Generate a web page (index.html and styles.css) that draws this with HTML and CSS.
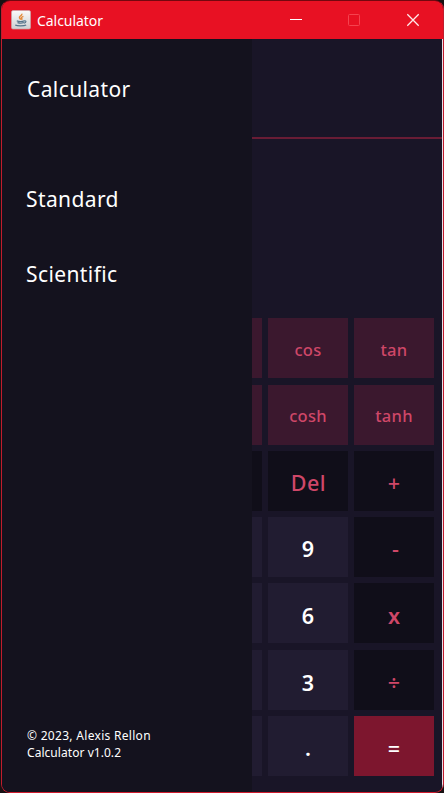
FILE: index.html
```html
<!DOCTYPE html>
<html lang="en">
<head>
<meta charset="utf-8">
<title>Calculator</title>
<link rel="stylesheet" href="styles.css">
</head>
<body>
<div class="window">
  <header class="titlebar">
    <svg class="app-icon" width="20" height="20" viewBox="0 0 20 20">
      <defs><linearGradient id="tile" x2="0" y2="1"><stop stop-color="#fafafa"/><stop offset="1" stop-color="#cdd0d3"/></linearGradient></defs>
      <rect x=".5" y=".5" width="19" height="18.5" rx="1.5" fill="url(#tile)" stroke="#c9a6a8" stroke-width=".7"/>
      <path d="M10.600 3.800c1.200 1.500-2.600 2.300-2.200 3.900.2.900 1.200 1.300 1.400 1.900M12.400 6.300c-2 .7-2.600 1.400-1.600 2.200.5.500.2.800-.2 1.200" fill="none" stroke="#e38a3c" stroke-width="1.400"/>
      <path d="M5.800 10.900c2 .6 5.500.6 7.500 0M6.500 12.600c2 .6 4.500.6 6.300 0M4.200 15c1.800 1.200 9 1.200 11 0M13.300 10.900c2.300-.3 2.200 1.800-.4 2.200" fill="none" stroke="#56758c" stroke-width="1.100"/>
    </svg>
    <span class="title">Calculator</span>
    <svg class="controls" width="130" height="14" viewBox="0 0 130 14" fill="none">
      <path d="M0 6.500h12" stroke="#fff"/>
      <rect x="58.500" y="1.500" width="11" height="11" rx="1" stroke="#f5434f"/>
      <path d="M117.300 1.300l11.400 11.400m0-11.400l-11.400 11.400" stroke="#ffe9ea" stroke-width="1.300"/>
    </svg>
  </header>
  <div class="content">
    <nav class="sidebar">
      <h1 class="heading">Calculator</h1>
      <a class="mode">Standard</a>
      <a class="mode scientific">Scientific</a>
      <footer class="about">© 2023, Alexis Rellon<br><span class="version">Calculator v1.0.2</span></footer>
    </nav>
    <main class="calculator">
      <div class="display"></div>
      <div class="keys">
        <i class="key fn"></i><b class="key fn">cos</b><b class="key fn">tan</b>
        <i class="key fn"></i><b class="key fn hyp">cosh</b><b class="key fn hyp">tanh</b>
        <i class="key op"></i><b class="key op del">Del</b><b class="key op">+</b>
        <i class="key"></i><b class="key">9</b><b class="key op minus">-</b>
        <i class="key"></i><b class="key low">6</b><b class="key op low times">x</b>
        <i class="key"></i><b class="key low">3</b><b class="key op low">÷</b>
        <i class="key"></i><b class="key">.</b><b class="key equals">=</b>
      </div>
    </main>
  </div>
</div>
</body>
</html>
```
FILE: styles.css
```css
* { box-sizing: border-box; }
body {
  margin: 0;
  height: 793px;
  overflow: hidden;
  background: #171113;
  font-family: "Noto Sans", "Open Sans", sans-serif;
  color: #fff;
}
.window {
  width: 443px;
  height: 793px;
  margin: 0 0 0 1px;
  overflow: hidden;
  border: 1px solid #c01c2d;
  border-top-color: #74070f;
  border-bottom-color: #d01c2e;
  border-radius: 9px;
  background: #191527;
}
.titlebar {
  display: flex;
  align-items: center;
  height: 38px;
  padding: 0 23px 0 9px;
  background: #e81123;
}
.app-icon { flex: none; }
.title {
  margin-left: 6px;
  font-size: 14px;
  letter-spacing: -.05px;
}
.controls { margin-left: auto; }
.content { display: flex; height: 753px; }
.sidebar {
  display: flex;
  flex-direction: column;
  width: 250px;
  padding: 35px 0 31px 25px;
  background: #14121e;
}
.heading, .mode {
  margin: 0;
  font-size: 21px;
  line-height: 30px;
  font-weight: 400;
  letter-spacing: .4px;
}
.heading { margin-bottom: 80px; }
.mode { margin-left: -1px; }
.scientific { margin-top: 45px; }
.about {
  margin-top: auto;
  font-size: 12px;
  line-height: 17px;
  letter-spacing: .3px;
}
.version { letter-spacing: .05px; }
.calculator {
  flex: 1;
  border-right: 1px solid #e9dfe7;
}
.display { height: 100px; border-bottom: 2px solid #691c35; }
.keys {
  display: grid;
  grid-template-columns: 10px 80px 80px;
  grid-template-rows: 61px 60px 60px 60px 61px 60px 60px;
  gap: 6px;
  margin-top: 179px;
}
.key {
  display: flex;
  align-items: center;
  justify-content: center;
  height: 60px;
  background: #211c31;
  font-size: 21.5px;
  font-weight: 600;
  padding-top: 3px;
}
.fn {
  background: #3b182e;
  color: #cf4768;
  font-size: 16.5px;
  font-weight: 500;
  letter-spacing: .3px;
}
.hyp { padding-top: 1px; }
.op { background: #100e19; color: #cf4768; font-weight: 500; }
.low { padding-top: 5px; }
.times { font-weight: 600; }
.del { letter-spacing: .5px; padding-left: 1px; }
.minus { padding-left: 3px; }
.equals { background: #7d162e; font-weight: 500; padding-top: 4px; }
```
